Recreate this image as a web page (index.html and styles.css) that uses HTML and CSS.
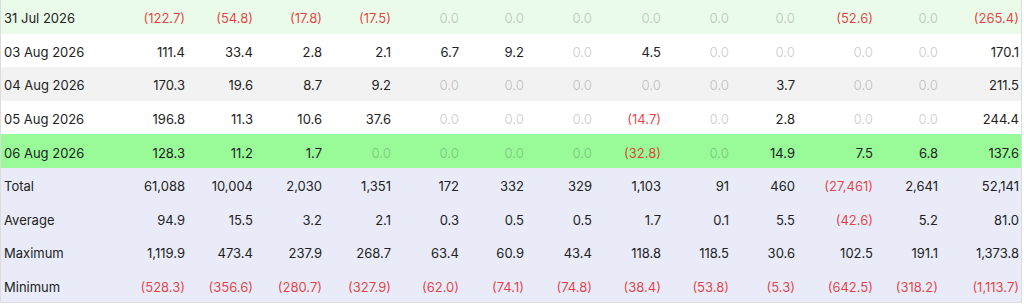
FILE: index.html
```html
<!DOCTYPE html>
<html>
<head>
<meta charset="utf-8">
<link rel="stylesheet" href="styles.css">
</head>
<body>
<table class="grid">
  <colgroup>
    <col class="c-label"><col class="c1"><col class="c2"><col class="c3"><col class="c4"><col class="c5"><col class="c6"><col class="c7"><col class="c8"><col class="c9"><col class="c10"><col class="c11"><col class="c12"><col class="c13">
  </colgroup>
  <tbody>
    <tr class="row-lightgreen">
      <td>31 Jul 2026</td><td class="neg">(122.7)</td><td class="neg">(54.8)</td><td class="neg">(17.8)</td><td class="neg">(17.5)</td><td class="zero">0.0</td><td class="zero">0.0</td><td class="zero">0.0</td><td class="zero">0.0</td><td class="zero">0.0</td><td class="zero">0.0</td><td class="neg">(52.6)</td><td class="zero">0.0</td><td class="neg">(265.4)</td>
    </tr>
    <tr class="row-white">
      <td>03 Aug 2026</td><td>111.4</td><td>33.4</td><td>2.8</td><td>2.1</td><td>6.7</td><td>9.2</td><td class="zero">0.0</td><td>4.5</td><td class="zero">0.0</td><td class="zero">0.0</td><td class="zero">0.0</td><td class="zero">0.0</td><td>170.1</td>
    </tr>
    <tr class="row-grey">
      <td>04 Aug 2026</td><td>170.3</td><td>19.6</td><td>8.7</td><td>9.2</td><td class="zero">0.0</td><td class="zero">0.0</td><td class="zero">0.0</td><td class="zero">0.0</td><td class="zero">0.0</td><td>3.7</td><td class="zero">0.0</td><td class="zero">0.0</td><td>211.5</td>
    </tr>
    <tr class="row-white">
      <td>05 Aug 2026</td><td>196.8</td><td>11.3</td><td>10.6</td><td>37.6</td><td class="zero">0.0</td><td class="zero">0.0</td><td class="zero">0.0</td><td class="neg">(14.7)</td><td class="zero">0.0</td><td>2.8</td><td class="zero">0.0</td><td class="zero">0.0</td><td>244.4</td>
    </tr>
    <tr class="row-green">
      <td>06 Aug 2026</td><td>128.3</td><td>11.2</td><td>1.7</td><td class="zero">0.0</td><td class="zero">0.0</td><td class="zero">0.0</td><td class="zero">0.0</td><td class="neg">(32.8)</td><td class="zero">0.0</td><td>14.9</td><td>7.5</td><td>6.8</td><td>137.6</td>
    </tr>
    <tr class="row-summary">
      <td>Total</td><td>61,088</td><td>10,004</td><td>2,030</td><td>1,351</td><td>172</td><td>332</td><td>329</td><td>1,103</td><td>91</td><td>460</td><td class="neg">(27,461)</td><td>2,641</td><td>52,141</td>
    </tr>
    <tr class="row-summary">
      <td>Average</td><td>94.9</td><td>15.5</td><td>3.2</td><td>2.1</td><td>0.3</td><td>0.5</td><td>0.5</td><td>1.7</td><td>0.1</td><td>5.5</td><td class="neg">(42.6)</td><td>5.2</td><td>81.0</td>
    </tr>
    <tr class="row-summary">
      <td>Maximum</td><td>1,119.9</td><td>473.4</td><td>237.9</td><td>268.7</td><td>63.4</td><td>60.9</td><td>43.4</td><td>118.8</td><td>118.5</td><td>30.6</td><td>102.5</td><td>191.1</td><td>1,373.8</td>
    </tr>
    <tr class="row-summary">
      <td>Minimum</td><td class="neg">(528.3)</td><td class="neg">(356.6)</td><td class="neg">(280.7)</td><td class="neg">(327.9)</td><td class="neg">(62.0)</td><td class="neg">(74.1)</td><td class="neg">(74.8)</td><td class="neg">(38.4)</td><td class="neg">(53.8)</td><td class="neg">(5.3)</td><td class="neg">(642.5)</td><td class="neg">(318.2)</td><td class="neg">(1,113.7)</td>
    </tr>
  </tbody>
</table>
</body>
</html>
```
FILE: styles.css
```css
html, body {
  margin: 0;
  padding: 0;
  background: #ffffff;
}

.grid {
  table-layout: fixed;
  border-collapse: separate;
  border-spacing: 0;
  width: 1022px;
  border-left: 1px solid #dcdcdc;
  border-right: 1px solid #dcdcdc;
  border-bottom: 1px solid #dcdcdc;
  font-family: Inter, "Noto Sans", sans-serif;
  font-size: 13px;
  color: #222222;
}

.c-label { width: 118px; }
.c1 { width: 68px; }
.c2 { width: 68px; }
.c3 { width: 69px; }
.c4 { width: 69px; }
.c5 { width: 68px; }
.c6 { width: 65px; }
.c7 { width: 68px; }
.c8 { width: 69px; }
.c9 { width: 68px; }
.c10 { width: 66px; }
.c11 { width: 78px; }
.c12 { width: 65px; }
.c13 { width: 81px; }

.grid td {
  height: 33.6px;
  box-sizing: border-box;
  padding: 3px 2px 0 2px;
  text-align: right;
  white-space: nowrap;
  line-height: 16px;
}

.grid td:first-child {
  text-align: left;
  padding-left: 3px;
}

.row-lightgreen { background: #eafbea; }
.row-white { background: #ffffff; }
.row-grey { background: #f2f2f2; }
.row-green { background: #98fb98; }
.row-summary { background: #e9ecf8; }

.neg { color: rgba(228, 30, 38, 0.85); }
.zero { color: rgba(0, 0, 0, 0.2); }
```
